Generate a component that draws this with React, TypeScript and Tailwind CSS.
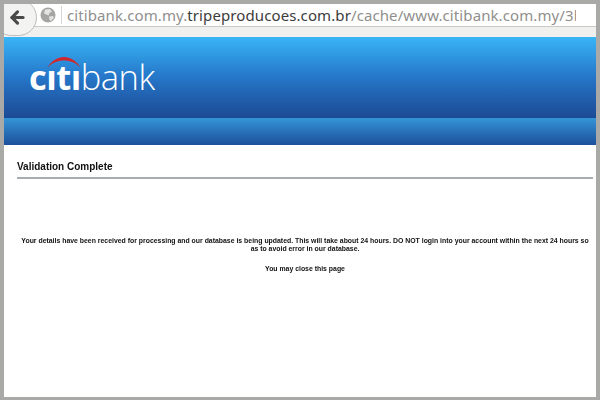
import { ArrowLeft } from "lucide-react";

function UrlBar() {
  return (
    <div className="relative h-[33px] shrink-0">
      <div className="flex h-[23px] items-center overflow-hidden bg-white pl-[36px] pr-[20px] border-b border-[#c9c9c6]">
        {/* globe */}
        <svg width="16" height="16" viewBox="0 0 16 16" className="shrink-0">
          <circle cx="8" cy="8" r="7.5" fill="#a5a5a3" />
          <path d="M5 2.5 L10 2 L12 4.5 L9.5 6 L8.5 8.5 L6.5 7.5 L4 6.5 Z M9 9.5 L13 9 L14 10.5 L11 14 L9.5 13 Z" fill="#e4e4e2" />
        </svg>
        <div className="ml-[5px] h-[18px] w-px shrink-0 bg-[#d6d6d4]" />
        <div className="ml-[5px] min-w-0 overflow-hidden whitespace-nowrap font-['Noto_Sans',sans-serif] text-[15px] leading-[23px] tracking-[0.1px] text-[#8f8f8d]">
          citibank.com.my.<span className="text-[#3c3c3a]">tripeproducoes.com.br</span>/cache/www.citibank.com.my/3b
        </div>
      </div>
      <div className="h-[10px] bg-[#f0f0ee]" />
      {/* back button */}
      <div className="absolute left-[-11px] top-[-5px] flex h-[37px] w-[44px] items-center justify-center rounded-full border border-[#bdbdbb] bg-[#f3f3f1] pl-[5px]">
        <ArrowLeft size={19} strokeWidth={4} className="text-[#4a4a4a]" />
      </div>
    </div>
  );
}

function Logo() {
  // the arc stands in for the dots of the i's, so dotless i here
  return (
    <div
      aria-label="citibank"
      className="relative w-fit whitespace-nowrap font-['Open_Sans',sans-serif] text-[34.5px] leading-[40px] tracking-[-0.5px] text-white"
    >
      <span className="font-bold">cıtı</span>
      <span className="font-light">bank</span>
      <svg width="34" height="12" viewBox="0 0 34 12" className="absolute left-[18px] top-[-1px]">
        <path d="M0.5 11.5 C9 -2.5 25 -2.5 33.5 11.5 C25 2 9 2 0.5 11.5 Z" fill="#d3262c" />
      </svg>
    </div>
  );
}

export default function App() {
  return (
    <div className="flex h-[400px] w-[600px] flex-col overflow-hidden border-x-4 border-t-4 border-b-[3px] border-[#a9a9a7] bg-white font-['Liberation_Sans',sans-serif] antialiased">
      <UrlBar />
      <div className="h-[81px] shrink-0 bg-gradient-to-b from-[#39b5f7] via-[#2676c8] to-[#1c4a94] pl-[25px] pt-[20px]">
        <Logo />
      </div>
      <div className="h-[27px] shrink-0 bg-gradient-to-b from-[#3595d6] to-[#1d4f9c]" />
      <div className="flex-1 pl-[13px] pr-[3px] pt-[15px]">
        <h1 className="border-b-2 border-[#a8adb3] pb-[3px] text-[10px] font-bold leading-[14px] text-[#111] will-change-transform">
          Validation Complete
        </h1>
        <p className="mt-[58px] text-center text-[6.9px] font-bold leading-[7.5px] text-[#111] will-change-transform">
          Your details have been received for processing and our database is being updated. This will take about 24 hours. DO NOT login into your account within the next 24 hours so as to avoid error in our database.
        </p>
        <p className="mt-[13px] text-center text-[6.9px] font-bold leading-[8px] text-[#111] will-change-transform">
          You may close this page
        </p>
      </div>
    </div>
  );
}
